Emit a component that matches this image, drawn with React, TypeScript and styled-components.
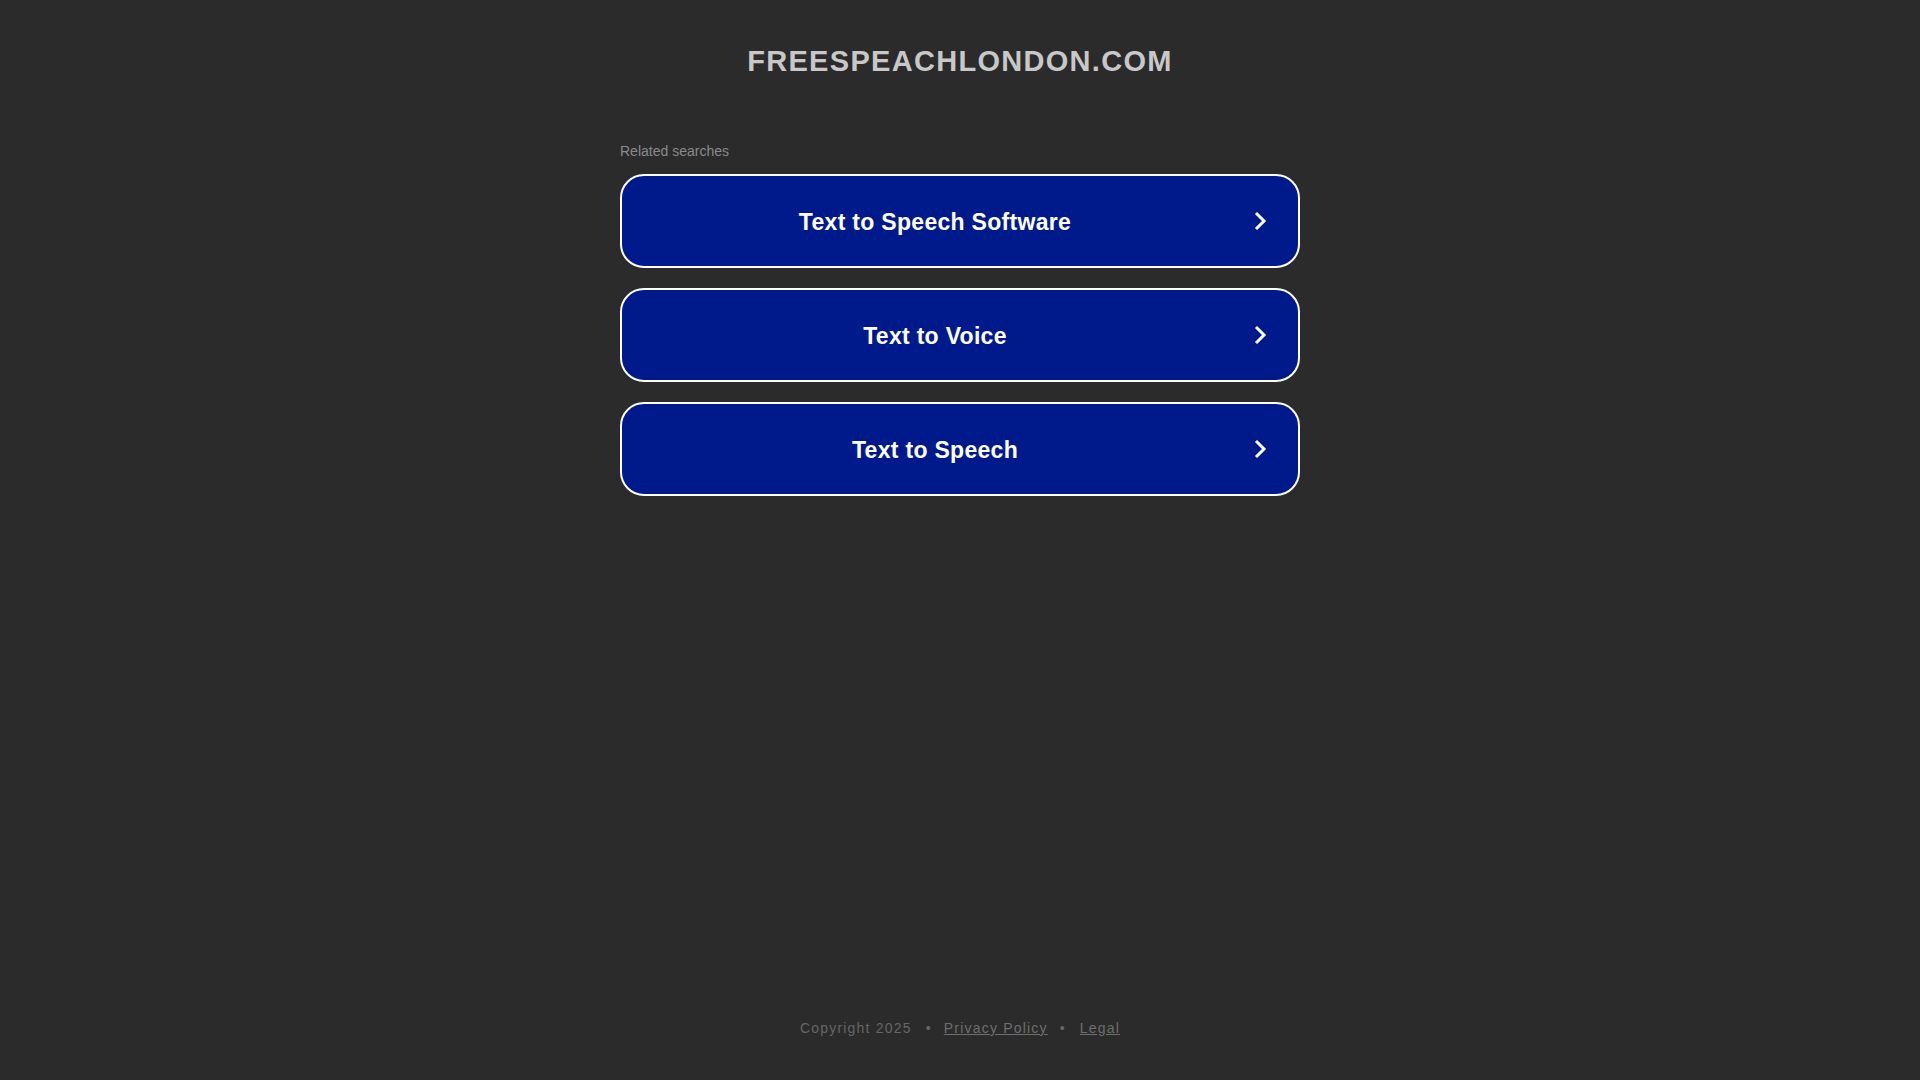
import React from "react";
import styled, { createGlobalStyle } from "styled-components";

const GlobalStyle = createGlobalStyle`
  html, body {
    margin: 0;
    padding: 0;
    background: #2b2b2b;
  }
  body {
    font-family: "Liberation Sans", Arial, Helvetica, sans-serif;
  }
  * { box-sizing: border-box; }
`;

const Page = styled.div`
  min-height: 100vh;
  display: flex;
  flex-direction: column;
  align-items: center;
`;

const Title = styled.h1`
  margin: 45px 0 0;
  font-size: 29px;
  line-height: 32px;
  font-weight: 700;
  letter-spacing: 1.3px;
  color: #c8c8c8;
  text-align: center;
`;

const Searches = styled.section`
  width: 680px;
  margin-top: 66px;
  display: flex;
  flex-direction: column;
`;

const Label = styled.div`
  font-size: 14px;
  line-height: 16px;
  color: #8a8a8a;
  margin-bottom: 15px;
`;

const List = styled.div`
  display: flex;
  flex-direction: column;
  gap: 20px;
`;

const Result = styled.a`
  display: flex;
  align-items: center;
  height: 94px;
  border: 2px solid #ffffff;
  border-radius: 24px;
  background: #011a8b;
  color: #ffffff;
  text-decoration: none;
  cursor: pointer;
`;

const ResultText = styled.span`
  flex: 1;
  padding-top: 3px;
  text-align: center;
  font-size: 23px;
  font-weight: 700;
  letter-spacing: 0.3px;
`;

const Chevron = styled.svg`
  width: 24px;
  height: 24px;
  margin-right: 26px;
  flex: none;
`;

const Footer = styled.footer`
  margin-top: auto;
  padding-bottom: 44px;
  display: flex;
  align-items: center;
  font-size: 14px;
  line-height: 16px;
  letter-spacing: 1.2px;
  color: #666666;
`;

const Dot = styled.span<{ $first?: boolean }>`
  margin: ${(p) => (p.$first ? "0 12px 0 14px" : "0 14px 0 12px")};
`;

const FooterLink = styled.a`
  color: #6e6e6e;
  text-decoration: underline;
`;

const items = ["Text to Speech Software", "Text to Voice", "Text to Speech"];

export default function App() {
  return (
    <>
      <GlobalStyle />
      <Page>
        <Title>FREESPEACHLONDON.COM</Title>
        <Searches>
          <Label>Related searches</Label>
          <List>
            {items.map((t) => (
              <Result key={t}>
                <ResultText>{t}</ResultText>
                <Chevron viewBox="0 0 24 24" fill="none">
                  <polyline
                    points="8,4 16,12 8,20"
                    stroke="#ffffff"
                    strokeWidth="3"
                    strokeLinecap="butt"
                    strokeLinejoin="miter"
                  />
                </Chevron>
              </Result>
            ))}
          </List>
        </Searches>
        <Footer>
          <span>Copyright 2025</span>
          <Dot $first>•</Dot>
          <FooterLink>Privacy Policy</FooterLink>
          <Dot>•</Dot>
          <FooterLink>Legal</FooterLink>
        </Footer>
      </Page>
    </>
  );
}
